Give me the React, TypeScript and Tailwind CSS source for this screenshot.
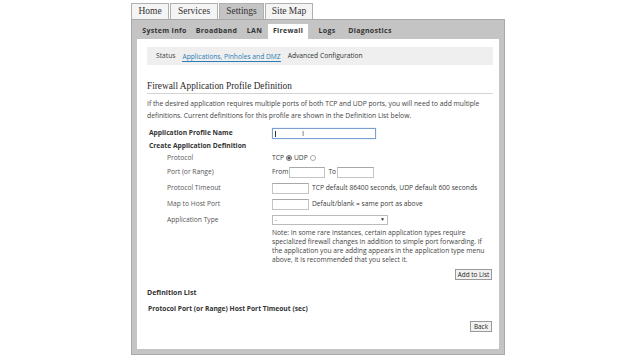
import React from 'react';

const topTabs = [
  { label: 'Home', w: 'w-[38px]', active: false },
  { label: 'Services', w: 'w-[48px]', active: false },
  { label: 'Settings', w: 'w-[45px]', active: true },
  { label: 'Site Map', w: 'w-[48px]', active: false },
];

const subTabs = [
  { label: 'System Info', w: 'w-[55px]' },
  { label: 'Broadband', w: 'w-[49px]' },
  { label: 'LAN', w: 'w-[27px]' },
  { label: 'Firewall', w: 'w-[40px]', active: true },
  { label: 'Logs', w: 'w-[38px]' },
  { label: 'Diagnostics', w: 'w-[48px]' },
];

const Field: React.FC<{ w: string }> = ({ w }) => (
  <span className={`inline-block h-[11px] ${w} border border-[#c4c4c4] border-t-[#a8a8a8] bg-white`} />
);

export default function App() {
  return (
    <div className="min-h-[360px] bg-white font-['Open_Sans',sans-serif] text-[#3a3a3a]">
      <div className="ml-[131px] w-[374px] pt-[3px]">
        {/* Top tabs */}
        <div className="flex gap-[1px] h-[16px] items-end">
          {topTabs.map(t => (
            <div
              key={t.label}
              className={`${t.w} h-[16px] flex items-center justify-center border border-b-0 border-[#b0b0b0] font-['Liberation_Serif',serif] text-[9.5px] text-[#333] ${
                t.active ? 'bg-[#c4c4c4]' : 'bg-[#f4f4f4]'
              }`}
            >
              {t.label}
            </div>
          ))}
        </div>

        {/* Frame */}
        <div className="bg-[#c4c4c4] border border-[#a9a9a9] px-[5px] pb-[5px]">
          <div className="flex h-[19px] items-end">
            {subTabs.map(t => (
              <div
                key={t.label}
                className={`${t.w} h-[15px] flex items-center justify-center text-[7px] font-bold tracking-[0.3px] text-[#333] ${
                  t.active ? 'bg-white' : ''
                }`}
              >
                {t.label}
              </div>
            ))}
          </div>

          {/* White panel */}
          <div className="relative bg-white h-[310px] pl-[10px] pr-[6px] pt-[8px]">
            {/* Sub nav */}
            <div className="h-[18px] bg-[#efefef] flex items-center gap-[7px] pl-[9px] text-[6.7px]">
              <span className="text-[#444]">Status</span>
              <span className="text-[#2a7db5] border-b-[1.5px] border-[#2a7db5] leading-[9px] mt-[2px]">
                Applications, Pinholes and DMZ
              </span>
              <span className="text-[#333]">Advanced Configuration</span>
            </div>

            <h1 className="mt-[14px] h-[15px] leading-[14px] border-b border-[#d4d4d4] font-['Liberation_Serif',serif] text-[9.3px] text-[#2a2a2a]">
              Firewall Application Profile Definition
            </h1>

            <p className="mt-[4px] text-[6.75px] leading-[11.5px] text-[#444]">
              If the desired application requires multiple ports of both TCP and UDP ports, you will need to add multiple
              definitions. Current definitions for this profile are shown in the Definition List below.
            </p>

            {/* Form */}
            <div className="mt-[5px] text-[6.7px]">
              <div className="flex h-[14px] items-center">
                <span className="w-[125px] pl-[2px] font-bold text-[#333]">Application Profile Name</span>
                <span className="relative inline-block h-[11px] w-[104px] border border-[#7aa0d0] bg-white shadow-[0_0_1px_#9cc0ea]">
                  <span className="absolute left-[2px] top-[2px] h-[6px] w-[0.5px] bg-[#333]" />
                  <span className="absolute left-[29px] top-[1px] text-[7px] leading-[8px] text-[#555] font-['DejaVu_Sans',sans-serif]">I</span>
                </span>
              </div>
              <div className="flex h-[12px] items-center">
                <span className="pl-[2px] font-bold text-[#333]">Create Application Definition</span>
              </div>
              <div className="flex h-[13px] items-center">
                <span className="w-[125px] pl-[20px] text-[#555]">Protocol</span>
                <span className="flex items-center gap-[2px]">
                  TCP
                  <span className="inline-flex h-[6px] w-[6px] items-center justify-center rounded-full border border-[#777] bg-[#bbb]">
                    <span className="h-[2px] w-[2px] rounded-full bg-[#333]" />
                  </span>
                  UDP
                  <span className="inline-block h-[6px] w-[6px] rounded-full border border-[#aaa] bg-white" />
                </span>
              </div>
              <div className="flex h-[15px] items-center">
                <span className="w-[125px] pl-[20px] text-[#555]">Port (or Range)</span>
                <span className="flex items-center">
                  <span className="mr-[1px]">From</span>
                  <Field w="w-[36px]" />
                  <span className="ml-[3px] mr-[1px]">To</span>
                  <Field w="w-[37px]" />
                </span>
              </div>
              <div className="flex h-[16px] items-center">
                <span className="w-[125px] pl-[20px] text-[#555]">Protocol Timeout</span>
                <Field w="w-[37px]" />
                <span className="ml-[3px]">TCP default 86400 seconds, UDP default 600 seconds</span>
              </div>
              <div className="flex h-[16px] items-center">
                <span className="w-[125px] pl-[20px] text-[#555]">Map to Host Port</span>
                <Field w="w-[37px]" />
                <span className="ml-[3px]">Default/blank = same port as above</span>
              </div>
              <div className="flex h-[16px] items-center">
                <span className="w-[125px] pl-[20px] text-[#555]">Application Type</span>
                <span className="flex h-[10px] w-[116px] items-center justify-between border border-[#bbb] bg-white px-[2px] text-[6px]">
                  <span>-</span>
                  <span className="text-[5px] text-[#333]">▼</span>
                </span>
              </div>
              <div className="flex">
                <span className="w-[125px]" />
                <p className="w-[217px] leading-[9px] text-[#444]">
                  Note: In some rare instances, certain application types require specialized firewall changes in addition
                  to simple port forwarding. If the application you are adding appears in the application type menu above,
                  it is recommended that you select it.
                </p>
              </div>
              <div className="mt-[5px] flex justify-end pr-[1px]">
                <button className="h-[11px] w-[37px] border border-[#999] bg-[#f2f2f2] text-[6.4px] leading-[9px] text-[#222]">
                  Add to List
                </button>
              </div>
            </div>

            <div className="mt-[7px] h-[12px] leading-[12px] text-[7px] font-bold text-[#333]">Definition List</div>
            <div className="mt-[4px] h-[12px] leading-[12px] pl-[1px] text-[6.7px] font-bold text-[#333]">
              Protocol Port (or Range) Host Port Timeout (sec)
            </div>
            <div className="mt-[6px] flex justify-end pr-[1px]">
              <button className="h-[11px] w-[22px] border border-[#999] bg-[#f2f2f2] text-[6.4px] leading-[9px] text-[#222]">
                Back
              </button>
            </div>
          </div>
        </div>
      </div>
    </div>
  );
}
